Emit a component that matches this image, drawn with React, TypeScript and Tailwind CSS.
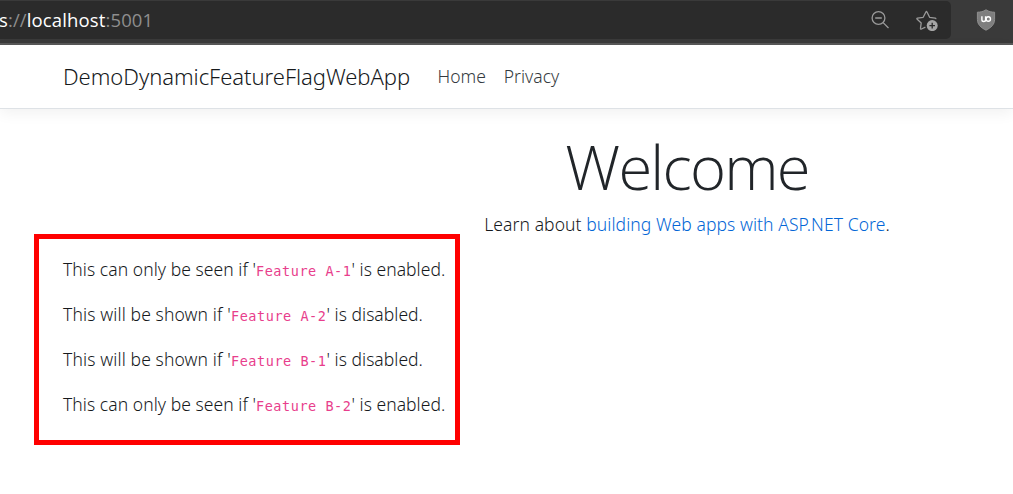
import type { ReactNode } from "react";

type Flag = { lead: string; name: string; tail: string; wide: boolean };

const flags: Flag[] = [
  { lead: "This can only be seen if '", name: "Feature A-1", tail: "' is enabled.", wide: true },
  { lead: "This will be shown if '", name: "Feature A-2", tail: "' is disabled.", wide: false },
  { lead: "This will be shown if '", name: "Feature B-1", tail: "' is disabled.", wide: false },
  { lead: "This can only be seen if '", name: "Feature B-2", tail: "' is enabled.", wide: true },
];

function BrowserBar() {
  return (
    <div className="flex h-[45px] border-b-2 border-[#585858] bg-[#3a3a3a] font-['Open_Sans',sans-serif] font-normal">
      <div className="mt-px flex h-[38px] w-[951px] shrink-0 items-center rounded-r-[5px] bg-[#2b2b2b]">
        <div className="flex-1 whitespace-pre text-[18.5px] leading-[38px] tracking-[0.13px] text-[#8e8e8e]">
          <span className="-ml-px text-white">s</span>://<span className="text-white">localhost</span>:5001
        </div>
        <svg className="mr-[26px] h-[20px] w-[20px]" viewBox="0 0 20 20" fill="none" stroke="#9a9a9a" strokeWidth="1.3">
          <circle cx="8.5" cy="8" r="6.4" />
          <path d="M5.2 8h6.600M13.100 12.600l5.400 5.400" />
        </svg>
        <svg className="mr-[13px] h-[22px] w-[22px]" viewBox="0 0 22 22" fill="none">
          <path
            d="M9.4 18.2 5.5 20c-.8.4-1.2.1-1-.8l.7-5.200-4-3.800c-.6-.6-.4-1 .3-1.100l5.700-.8 2.700-5.300c.4-.7.8-.7 1.100 0l2.600 5.300 5.600.9c.7.1.8.5.4 1"
            stroke="#9a9a9a"
            strokeWidth="1.3"
            strokeLinejoin="round"
          />
          <circle cx="16.2" cy="16.6" r="5.5" fill="#a5a5a5" />
          <path d="M16.2 13.8v5.6M13.4 16.6H19" stroke="#2b2b2b" strokeWidth="1.3" />
        </svg>
      </div>
      <svg className="ml-[25px] mt-[9px] h-[22px] w-[20px]" viewBox="0 0 20 22" fill="none">
        <path
          d="M10 .8c2.7 1.8 5.5 2.4 8.6 2.4v7.3c0 5-3.6 8.2-8.6 10.7-5-2.5-8.6-5.7-8.6-10.7V3.2C4.5 3.2 7.3 2.6 10 .8Z"
          fill="#7e7e7e"
          stroke="#8e8e8e"
        />
        <path d="M5.9 7.3v3.4c0 2.4 3.7 2.4 3.7 0V7.3" stroke="#fff" strokeWidth="1.4" />
        <circle cx="12.3" cy="10" r="2.2" stroke="#fff" strokeWidth="1.4" />
      </svg>
    </div>
  );
}

function NavLink({ children }: { children: ReactNode }) {
  return <a className="leading-[27px] text-[#343a40]">{children}</a>;
}

export default function App() {
  return (
    <div className="h-[494px] w-full overflow-hidden bg-white font-['Noto_Sans','Open_Sans',sans-serif] text-[17.5px] font-light leading-[27px] text-[#16191c]">
      <BrowserBar />
      <header className="flex h-[64px] items-center border-b border-[#dee2e6] pl-[63px] shadow-[0_4px_14px_rgba(0,0,0,0.06)]">
        <a className="-mt-[2px] w-[374.5px] whitespace-nowrap text-[22px] leading-[34px] tracking-[-0.04px]">
          DemoDynamicFeatureFlagWebApp
        </a>
        <nav className="flex gap-[18px]">
          <NavLink>Home</NavLink>
          <NavLink>Privacy</NavLink>
        </nav>
      </header>
      <main className="ml-[63px] w-[1248px] pt-[19px]">
        <div className="text-center">
          <h1 className="h-[83px] font-['Open_Sans',sans-serif] text-[61.5px] font-light leading-[76px] tracking-[-1.8px] text-[#212529]">
            Welcome
          </h1>
          <p className="tracking-[0.08px]">
            Learn about <a className="text-[#0366d6]">building Web apps with ASP.NET Core</a>.
          </p>
        </div>
        <section className="-ml-[29px] mt-[-4px] flex h-[211px] w-[426px] flex-col gap-[18px] border-[5px] border-[#f00] pl-[24px] pt-[17px]">
          {flags.map((f) => (
            <p key={f.name} className="flex h-[27px] items-baseline whitespace-pre">
              <span className={f.wide ? "w-[193px] tracking-[0.06px]" : "w-[168px] tracking-[0.13px]"}>{f.lead}</span>
              <code className="w-[95.5px] font-['DejaVu_Sans_Mono',monospace] text-[13.5px] leading-[20px] tracking-[0.55px] text-[#e83e8c]">
                {f.name}
              </code>
              <span className="tracking-[0.03px]">{f.tail}</span>
            </p>
          ))}
        </section>
      </main>
    </div>
  );
}
